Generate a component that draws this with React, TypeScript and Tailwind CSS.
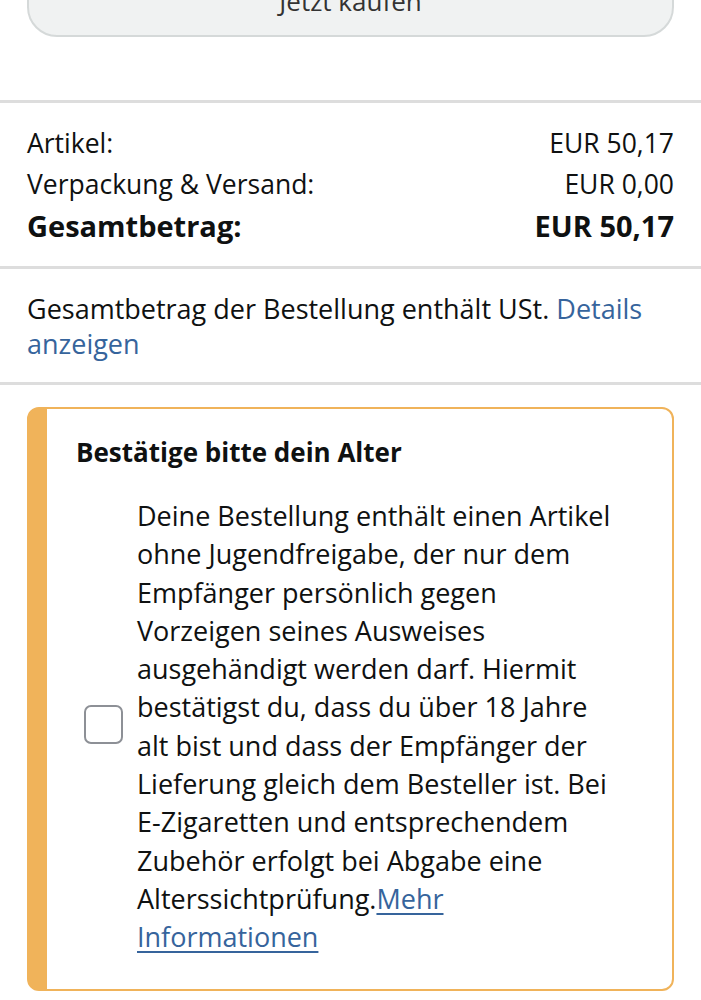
const FONT = { fontFamily: '"Open Sans", "Noto Sans", sans-serif' }

function Row({ label, value, bold }: { label: string; value: string; bold?: boolean }) {
  return (
    <div className={`flex justify-between items-center h-[41px] ${bold ? 'font-bold text-[29px]' : 'text-[26.5px]'}`}>
      <span>{label}</span>
      <span>{value}</span>
    </div>
  )
}

export default function App() {
  return (
    <div className="w-[701px] h-[1000px] overflow-hidden bg-white text-[#0f1111]" style={FONT}>
      <div className="px-[27px]">
        <button className="block -mt-[35px] w-full h-[72px] rounded-[30px] bg-[#f0f2f2] border-2 border-[#d5d9d9] text-[26px] text-[#333] leading-none">
          Jetzt kaufen
        </button>
      </div>

      <div className="mt-[63px] h-[3px] bg-[#dddddd]" />

      <div className="px-[27px] pt-[20px] pb-[20px]">
        <Row label="Artikel:" value="EUR 50,17" />
        <Row label="Verpackung & Versand:" value="EUR 0,00" />
        <Row label="Gesamtbetrag:" value="EUR 50,17" bold />
      </div>

      <div className="h-[3px] bg-[#dddddd]" />

      <p className="px-[27px] pt-[22px] pb-[21px] text-[27px] leading-[35px]">
        Gesamtbetrag der Bestellung enthält USt.{' '}
        <a className="text-[#36649c]">Details anzeigen</a>
      </p>

      <div className="h-[3px] bg-[#dddddd]" />

      <div className="mx-[27px] mt-[22px] h-[584px] rounded-[12px] border-2 border-l-[20px] border-[#f0b35a] pl-[29px] pr-[14px] pt-[25px]">
        <h2 className="text-[26px] font-bold leading-[36px]">Bestätige bitte dein Alter</h2>
        <div className="mt-[27px] flex items-center gap-[14px]">
          <div className="ml-[8px] mb-[4px] w-[39px] h-[39px] shrink-0 rounded-[7px] border-2 border-[#8d9096] bg-white" />
          <p className="text-[27px] leading-[38.3px] whitespace-nowrap">
            Deine Bestellung enthält einen Artikel<br />
            ohne Jugendfreigabe, der nur dem<br />
            Empfänger persönlich gegen<br />
            Vorzeigen seines Ausweises<br />
            ausgehändigt werden darf. Hiermit<br />
            bestätigst du, dass du über 18 Jahre<br />
            alt bist und dass der Empfänger der<br />
            Lieferung gleich dem Besteller ist. Bei<br />
            E-Zigaretten und entsprechendem<br />
            Zubehör erfolgt bei Abgabe eine<br />
            Alterssichtprüfung.<a className="text-[#36649c] underline underline-offset-[4px]">Mehr<br />Informationen</a>
          </p>
        </div>
      </div>
    </div>
  )
}
